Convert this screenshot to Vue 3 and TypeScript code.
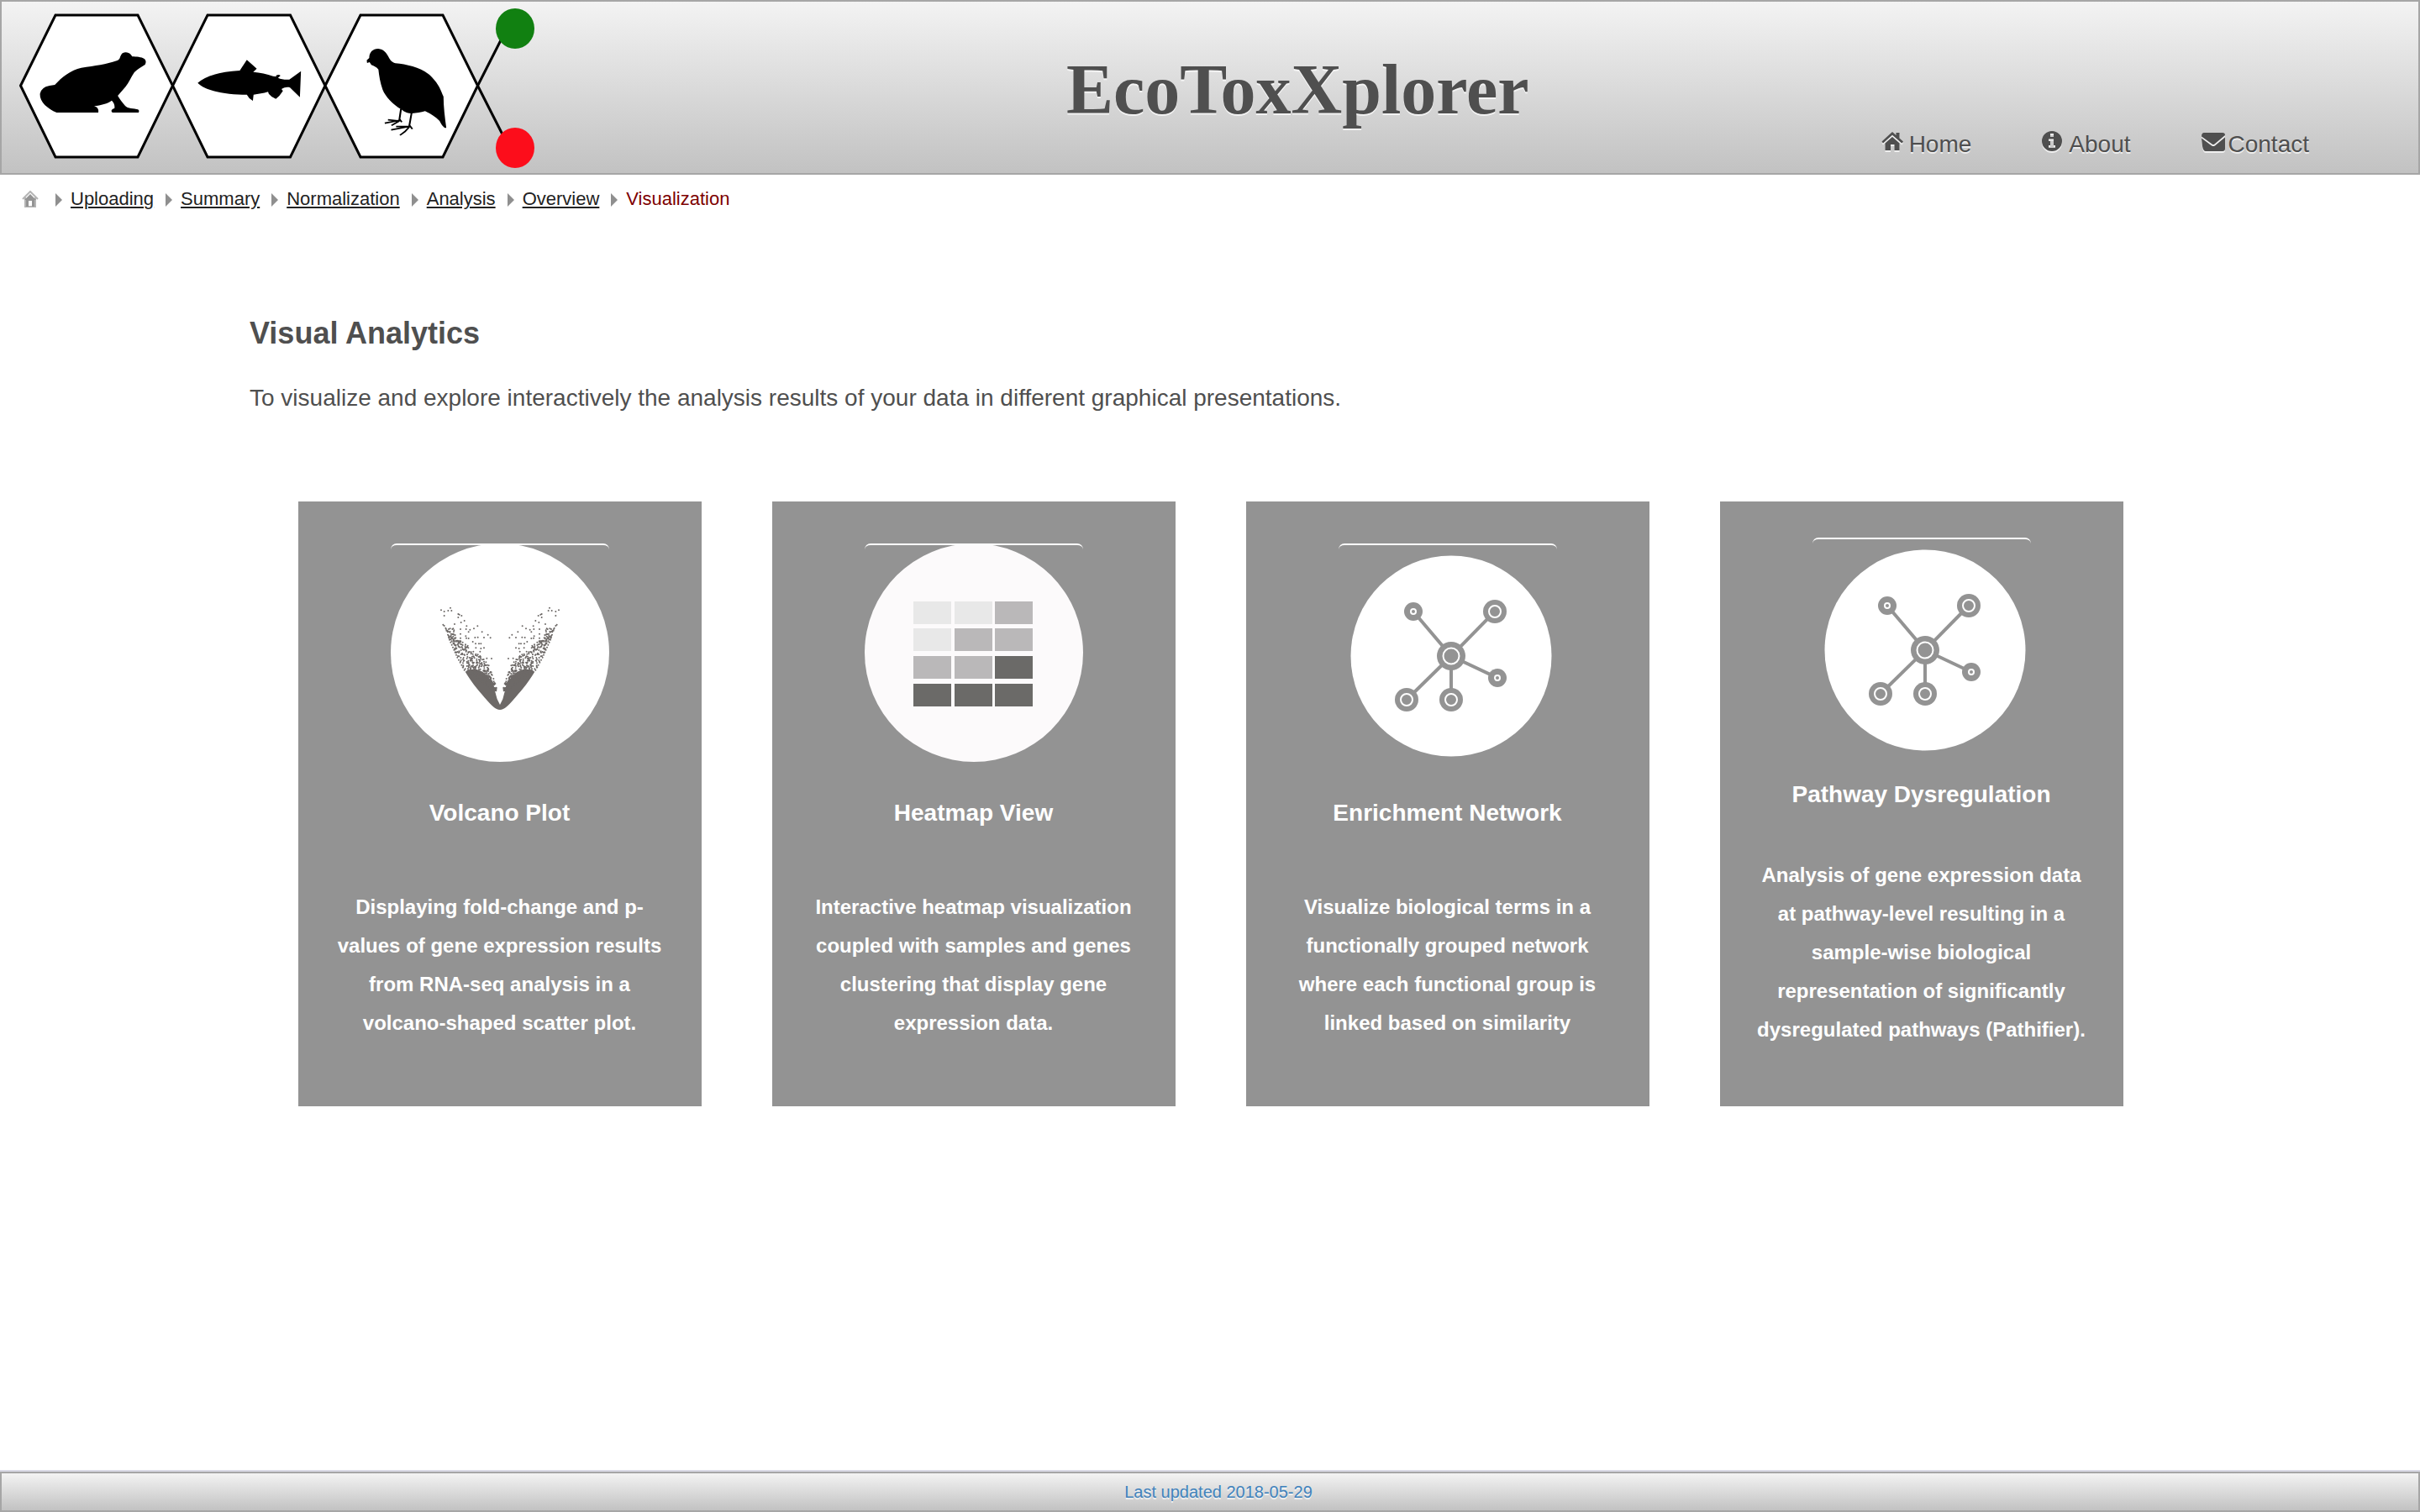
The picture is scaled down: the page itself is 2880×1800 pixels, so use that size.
<script setup lang="ts">
type Art = 'volcano' | 'heatmap' | 'network'

interface Tool {
  title: string
  text: string
  art: Art
}

const tools: Tool[] = [
  {
    title: 'Volcano Plot',
    text: 'Displaying fold-change and p-values of gene expression results from RNA-seq analysis in a volcano-shaped scatter plot.',
    art: 'volcano',
  },
  {
    title: 'Heatmap View',
    text: 'Interactive heatmap visualization coupled with samples and genes clustering that display gene expression data.',
    art: 'heatmap',
  },
  {
    title: 'Enrichment Network',
    text: 'Visualize biological terms in a functionally grouped network where each functional group is linked based on similarity',
    art: 'network',
  },
  {
    title: 'Pathway Dysregulation',
    text: 'Analysis of gene expression data at pathway-level resulting in a sample-wise biological representation of significantly dysregulated pathways (Pathifier).',
    art: 'network',
  },
]

const steps: string[] = ['Uploading', 'Summary', 'Normalization', 'Analysis', 'Overview']

const heatRows: string[][] = [
  ['#e8e8e8', '#e8e8e8', '#bab8b9'],
  ['#e8e8e8', '#bab8b9', '#bab8b9'],
  ['#bab8b9', '#bab8b9', '#6b6a68'],
  ['#6b6a68', '#6b6a68', '#6b6a68'],
]
const heatX = [58, 107, 155]
const heatY = [69, 101, 134, 167]

const centre = { x: 134, y: 134 }
const nodes = [
  { x: 89, y: 81, r: 11, ring: 3, line: 4 },
  { x: 186, y: 81, r: 14, ring: 7, line: 4 },
  { x: 189, y: 160, r: 11, ring: 3, line: 4 },
  { x: 81, y: 186, r: 14, ring: 7, line: 4 },
  { x: 134, y: 186, r: 14, ring: 7, line: 4 },
]

// Piecewise linear lookup over [y, x] pairs.
function along(points: number[][], y: number): number {
  for (let i = 1; i < points.length; i++) {
    const [y0, x0] = points[i - 1]
    const [y1, x1] = points[i]
    if (y <= y1) return x0 + ((x1 - x0) * (y - y0)) / (y1 - y0)
  }
  return points[points.length - 1][1]
}

const outliers: number[][] = [
  [72, 112], [83, 117], [97, 114], [105, 104], [109, 114], [83, 132], [133, 126], [137, 128],
  [145, 132], [133, 138], [155, 150], [143, 156], [79, 164], [83, 168], [120, 162], [88, 176],
  [99, 180], [115, 178], [141, 180], [163, 169], [161, 180], [175, 182], [170, 190], [189, 178],
  [202, 169], [218, 190], [141, 197], [193, 210], [203, 209], [239, 200], [248, 211], [162, 212],
  [170, 213], [225, 210], [141, 212], [160, 205], [185, 225], [195, 232], [207, 232], [214, 232],
  [225, 247], [211, 260], [252, 285], [235, 284], [196, 247], [187, 260], [189, 279], [214, 249],
]

function volcanoDots(): string {
  const outer = [[175, 88], [215, 101], [285, 132], [332, 158], [345, 185], [400, 258]]
  const inner = [[175, 122], [215, 126], [232, 165], [262, 180], [275, 218], [310, 242], [345, 256], [375, 266], [405, 272]]
  let seed = 11
  const rand = (): number => {
    seed = (seed * 16807) % 2147483647
    return seed / 2147483647
  }
  const dots = outliers.slice()
  for (let i = 0; i < 420; i++) {
    const y = 178 + 222 * Math.pow(rand(), 0.7)
    const a = along(outer, y)
    const b = along(inner, y)
    dots.push([a + (b - a) * rand(), y])
  }
  for (let y = 200; y < 334; y += 9) dots.push([along(outer, y), y])
  return dots
    .map(([x, y]) => {
      const cx = Math.round(x)
      const cy = Math.round(y)
      return `M${cx} ${cy}h0M${564 - cx} ${cy}h0`
    })
    .join('')
}

const dotsPath = volcanoDots()
</script>

<template>
  <div class="page">
    <header class="top">
      <svg class="logo" viewBox="0 0 640 204" aria-hidden="true">
        <g transform="translate(-2 -2)">
          <g fill="#fff" stroke="#000" stroke-width="3">
            <path d="M24.500 102 66 18H164L205.500 102 164 187H66Z" />
            <path d="M205.500 102 247 18H345.500L387 102 345.500 187H247Z" />
            <path d="M387 102 429 18H527L568.500 102 527 187H429Z" />
            <path fill="none" d="M568.500 102 600 40M568.500 102 600 164" />
          </g>
          <ellipse cx="613" cy="34" rx="23" ry="24" fill="#118011" />
          <ellipse cx="613" cy="176" rx="23" ry="24" fill="#fc0d1b" />
          <g transform="scale(.42088 .33333)">
            <path d="M113 335Q116 312 140 306L155 303C175 275 200 250 230 242C270 235 300 230 330 217C340 213 338 205 343 195C347 184 363 184 370 195L374 202C385 203 400 203 408 210C414 216 413 225 410 231C400 240 390 245 380 258C370 275 365 295 355 310L333 342C338 352 345 365 354 378C360 388 380 387 390 391Q395 395 392 402H318Q312 396 318 390L324 386C325 375 321 365 316 359C305 370 285 376 266 379C275 382 280 390 278 402H160C135 388 112 365 113 335Z" />
            <path d="M559 296C580 272 620 256 678 252L698 214 726 245 716 257C735 260 755 264 772 272L782 274C776 270 788 263 793 270L790 274 786 278C795 283 805 285 818 284L851 254 848 347 820 313C812 310 805 312 796 318L800 325 790 342 780 353 768 345 760 335 758 328C745 333 730 336 717 338L715 360 705 351 698 338C640 338 580 325 559 296Z" />
            <path d="M1038 225 1037 215 1044 207C1044 185 1056 173 1070 174C1085 176 1092 188 1098 202C1104 216 1107 222 1118 226C1150 230 1190 240 1215 268C1235 292 1245 315 1251 337L1254 345C1254 380 1258 420 1262 457C1255 458 1248 445 1243 432C1230 415 1215 405 1202 397C1190 402 1178 403 1165 405C1155 405 1145 402 1134 390C1110 372 1090 345 1082 320C1075 295 1072 270 1070 248C1065 240 1058 236 1050 232L1045 222Z" />
            <path fill="none" stroke="#000" stroke-width="5" d="M1134 388 1129 430 1088 440M1130 432 1097 428M1129 432 1107 448M1129 424 1136 436M1164 402 1157 452 1106 464M1156 452 1120 452M1157 454 1145 470 1131 483M1157 446 1166 461" />
          </g>
        </g>
      </svg>
      <h1 class="brand">EcoToxXplorer</h1>
      <nav class="menu" aria-label="Main">
        <a href="#home">
          <svg viewBox="0 0 32 24" aria-hidden="true">
            <path d="M12 7 20.500 14.500V23H14.500V16H10V23H3.500V14.500Z" />
            <path d="M12 1 16.500 5V2H20.500V8.500L25 12.500 23.300 14.500 12 4.800 1 14.500-.5 12.500Z" />
          </svg>Home</a>
        <a href="#about">
          <svg viewBox="0 0 32 24" aria-hidden="true">
            <path fill-rule="evenodd" d="M12 0A12 12 0 1 1 12 24A12 12 0 1 1 12 0ZM10 3V7H14V3ZM8 9.500V12H10V17H8V20H16V17H14V9.500Z" />
          </svg>About</a>
        <a href="#contact">
          <svg viewBox="0 0 32 24" aria-hidden="true">
            <path d="M3 2H25Q28 2 28 5L15.500 15.500Q14 16.500 12.500 15.500L0 6.500Q0 2 3 2Z" />
            <path d="M0 8.500 12 17.500Q14 18.700 16 17.500L28 7.500V21Q28 24 25 24H5Q2 24 1 18Z" />
          </svg>Contact</a>
      </nav>
    </header>

    <nav class="crumbs" aria-label="Breadcrumb">
      <a class="home" href="#start" aria-label="Start">
        <svg viewBox="0 0 20 20" aria-hidden="true">
          <path fill="none" stroke="#b5b5b5" stroke-width="2" d="M1 10 10 1 19 10M4 8V19H16V8" />
          <path fill="#949494" d="M10 4 17 11H15V19H12V12H8V19H5V11H3Z" />
        </svg>
      </a>
      <template v-for="step in steps" :key="step">
        <span class="arrow"></span>
        <a :href="'#' + step.toLowerCase()">{{ step }}</a>
      </template>
      <span class="arrow"></span>
      <span class="current" aria-current="page">Visualization</span>
    </nav>

    <main class="main">
      <h2>Visual Analytics</h2>
      <p class="intro">To visualize and explore interactively the analysis results of your data in different graphical presentations.</p>
      <div class="cards">
        <a v-for="tool in tools" :key="tool.title" class="card" :href="'#' + tool.art">
          <span class="thumb">
            <svg v-if="tool.art === 'volcano'" viewBox="0 0 260 260" aria-hidden="true">
              <circle cx="130" cy="130" r="130" fill="#fff" />
              <g transform="translate(36 42) scale(.33333)">
                <path fill="#6d6967" d="M158 332C185 315 218 324 240 350C258 372 264 400 272 430L282 450 292 430C300 400 306 372 324 350C346 324 379 315 406 332C380 376 350 408 330 432C312 452 298 468 282 468C266 468 252 452 234 432C214 408 184 376 158 332Z" />
                <path fill="none" stroke="#6d6967" stroke-width="6" stroke-linecap="round" :d="dotsPath" />
              </g>
            </svg>
            <svg v-else-if="tool.art === 'heatmap'" viewBox="0 0 260 260" aria-hidden="true">
              <circle cx="130" cy="130" r="130" fill="#fcfafb" />
              <template v-for="(row, r) in heatRows" :key="r">
                <rect v-for="(fill, c) in row" :key="c" :x="heatX[c]" :y="heatY[r]" width="45" height="27" :fill="fill" />
              </template>
            </svg>
            <svg v-else viewBox="0 0 260 260" aria-hidden="true">
              <circle :cx="centre.x" :cy="centre.y" r="119.500" fill="#fff" />
              <g v-for="n in nodes" :key="n.x + '-' + n.y">
                <line :x1="centre.x" :y1="centre.y" :x2="n.x" :y2="n.y" stroke="#939393" :stroke-width="n.line" />
                <circle :cx="n.x" :cy="n.y" :r="n.r" fill="#939393" />
                <circle :cx="n.x" :cy="n.y" :r="n.ring" fill="none" stroke="#fff" stroke-width="2" />
              </g>
              <circle :cx="centre.x" :cy="centre.y" r="17" fill="#939393" />
              <circle :cx="centre.x" :cy="centre.y" r="9.500" fill="none" stroke="#fff" stroke-width="2" />
            </svg>
          </span>
          <span class="name">{{ tool.title }}</span>
          <span class="text">{{ tool.text }}</span>
        </a>
      </div>
    </main>

    <footer class="foot">
      <div class="bar"><a href="#updates">Last updated 2018-05-29</a></div>
    </footer>
  </div>
</template>

<style>
body {
  background: #fff;
}
</style>

<style scoped>
.page {
  display: flex;
  flex-direction: column;
  min-height: 100vh;
  font-family: "Liberation Sans", Arial, sans-serif;
  color: #4f4f4f;
}
.page * {
  box-sizing: border-box;
}
.top {
  display: flex;
  align-items: flex-start;
  border: 2px solid #a6a6a6;
  background: linear-gradient(#f3f3f3, #c2c2c2);
  text-shadow: 0 2px 0 rgba(255, 255, 255, 0.7);
}
.logo {
  display: block;
  flex: none;
  width: 640px;
  height: 204px;
}
.brand {
  flex: 1;
  margin: 0;
  padding: 63px 0 0 207px;
  text-align: center;
  font: bold 84px/84px "Liberation Serif", "Times New Roman", serif;
}
.menu {
  display: flex;
  align-self: flex-end;
  gap: 84px;
  padding: 0 130px 18px 0;
  font-size: 28px;
  line-height: 32px;
}
.menu a {
  display: flex;
  color: inherit;
  text-decoration: none;
}
.menu svg {
  width: 32px;
  height: 24px;
  overflow: visible;
  fill: #4f4f4f;
  filter: drop-shadow(0 2px 0 rgba(255, 255, 255, 0.7));
}
.crumbs {
  display: flex;
  align-items: center;
  padding: 16px 26px;
  font-size: 22px;
  line-height: 26px;
}
.crumbs a {
  color: #222;
  text-underline-offset: 2px;
  text-decoration-thickness: 2px;
}
.home svg {
  display: block;
  width: 20px;
  height: 20px;
}
.arrow {
  margin: 2px 10px 0 14px;
  border: solid transparent;
  border-width: 8px 0 8px 8px;
  border-left-color: #8f8f8f;
}
.home + .arrow {
  margin-left: 20px;
}
.current {
  color: #7d0000;
}
.main {
  flex: 1;
  padding: 110px 296px 60px 297px;
}
h2 {
  margin: 0;
  font-size: 36px;
  line-height: 42px;
}
.intro {
  margin: 38px 0 0;
  font-size: 28px;
  line-height: 36px;
}
.cards {
  display: flex;
  justify-content: center;
  gap: 84px;
  margin-top: 105px;
}
.card {
  display: flex;
  flex: 0 1 480px;
  flex-direction: column;
  align-items: center;
  justify-content: space-around;
  min-height: 720px;
  padding: 32px 40px 58px;
  background: #939393;
  color: #fff;
  font-weight: bold;
  text-align: center;
  text-decoration: none;
}
.thumb {
  position: relative;
  display: block;
  width: 260px;
  height: 260px;
}
.thumb::before {
  content: "";
  position: absolute;
  inset: 0;
  border-top: 2px solid #fff;
  border-radius: 7px;
}
.thumb svg {
  display: block;
}
.name {
  margin-bottom: 27px;
  font-size: 28px;
  line-height: 50px;
}
.text {
  font-size: 24px;
  line-height: 46px;
}
.foot {
  border-top: 2px solid #dadae6;
}
.bar {
  padding: 10px 0 10px 20px;
  border: 2px solid #a6a6a6;
  background: linear-gradient(#f3f3f3, #c2c2c2);
  text-align: center;
  font-size: 20px;
  line-height: 24px;
  text-shadow: 0 2px 0 rgba(255, 255, 255, 0.7);
}
.bar a {
  color: #4183bd;
  text-decoration: none;
}
</style>
